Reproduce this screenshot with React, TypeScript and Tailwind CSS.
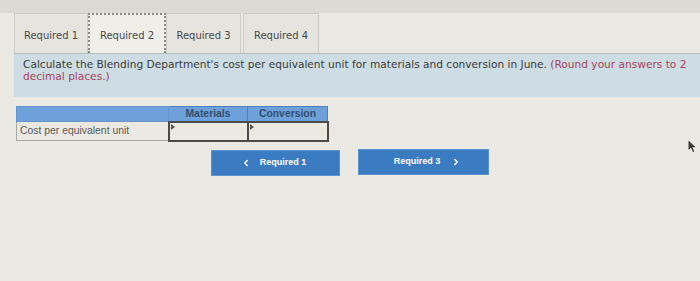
import React from 'react';
import { ChevronLeft, ChevronRight } from 'lucide-react';

// Tab button along the top of the question
const Tab: React.FC<{ label: string; active?: boolean; className?: string }> = ({ label, active, className = "" }) => (
  <div
    className={`h-[40px] pt-[3px] flex items-center justify-center text-[10px] text-[#4a4a4a] ${
      active
        ? "bg-[#efeee9] border-2 border-dotted border-[#8a8a8a] border-b-0"
        : "bg-[#e6e4df] border border-[#cdcbc6] border-b-0"
    } ${className}`}
  >
    {label}
  </div>
);

const InputCell: React.FC = () => (
  <td className="relative border-2 border-[#4b4b4b] bg-[#ece9e3] p-0">
    <span className="absolute left-[1px] top-[1px] w-0 h-0 border-y-[3px] border-y-transparent border-l-[4px] border-l-[#555]" />
  </td>
);

const App: React.FC = () => {
  return (
    <div className="relative w-[700px] h-[281px] overflow-hidden bg-[#ebe9e3] font-['DejaVu_Sans',sans-serif]">
      {/* top shaded strip */}
      <div className="h-[13px] bg-[#dcdad5]" />

      <div className="pl-[14px]">
        {/* Tabs */}
        <div className="flex">
          <Tab label="Required 1" className="w-[74px]" />
          <Tab label="Required 2" active className="w-[78px]" />
          <Tab label="Required 3" className="w-[75px]" />
          <Tab label="Required 4" className="w-[76px] ml-[2px]" />
        </div>

        {/* Instruction box */}
        <div className="h-[44px] bg-[#cedde3] border-t border-[#b3bfc4] pl-[9px] pt-[4px] text-[10.6px] leading-[12px] text-[#3b3b3b]">
          Calculate the Blending Department's cost per equivalent unit for materials and conversion in June.{" "}
          <span className="text-[#a8435c]">(Round your answers to 2</span>
          <br />
          <span className="text-[#a8435c]">decimal places.)</span>
        </div>

        {/* Table */}
        <table className="mt-[9px] ml-[2px] border-collapse font-['Liberation_Sans',sans-serif] text-[10.4px] leading-[12px]">
          <thead>
            <tr className="h-[15px] bg-[#6ea1d9]">
              <th className="w-[152px] border border-[#6595cb] p-0" />
              <th className="w-[79px] border border-[#4d80b9] p-0 font-bold text-[#34506f]">Materials</th>
              <th className="w-[80px] border border-[#4d80b9] p-0 font-bold text-[#34506f]">Conversion</th>
            </tr>
          </thead>
          <tbody>
            <tr className="h-[19px]">
              <td className="border border-[#a9a8a5] bg-[#ece9e4] pl-[3px] py-0 text-[#5a5a5a]">Cost per equivalent unit</td>
              <InputCell />
              <InputCell />
            </tr>
          </tbody>
        </table>

        {/* Navigation buttons */}
        <div className="flex items-start mt-[7px] ml-[197px] gap-[18px] font-['Liberation_Sans',sans-serif] text-[9px] font-bold text-white">
          <button className="w-[129px] h-[26px] mt-[1px] bg-[#3b7bc2] border border-[#5a92cf] flex items-center justify-center gap-[9px] pr-[4px]">
            <ChevronLeft size={10} strokeWidth={3.5} />
            <span>Required 1</span>
          </button>
          <button className="w-[131px] h-[26px] bg-[#3b7bc2] border border-[#5a92cf] flex items-center justify-center gap-[11px] pl-[8px]">
            <span>Required 3</span>
            <ChevronRight size={10} strokeWidth={3.5} />
          </button>
        </div>
      </div>

      {/* mouse pointer */}
      <svg className="absolute left-[688px] top-[140px]" width="8" height="13" viewBox="0 0 8 13">
        <path d="M0.5 0.5 L0.5 10 L3 7.8 L5 12 L6.3 11.4 L4.4 7.3 L7.5 7.3 Z" fill="#3a3a3a" />
      </svg>
    </div>
  );
};

export default App;
